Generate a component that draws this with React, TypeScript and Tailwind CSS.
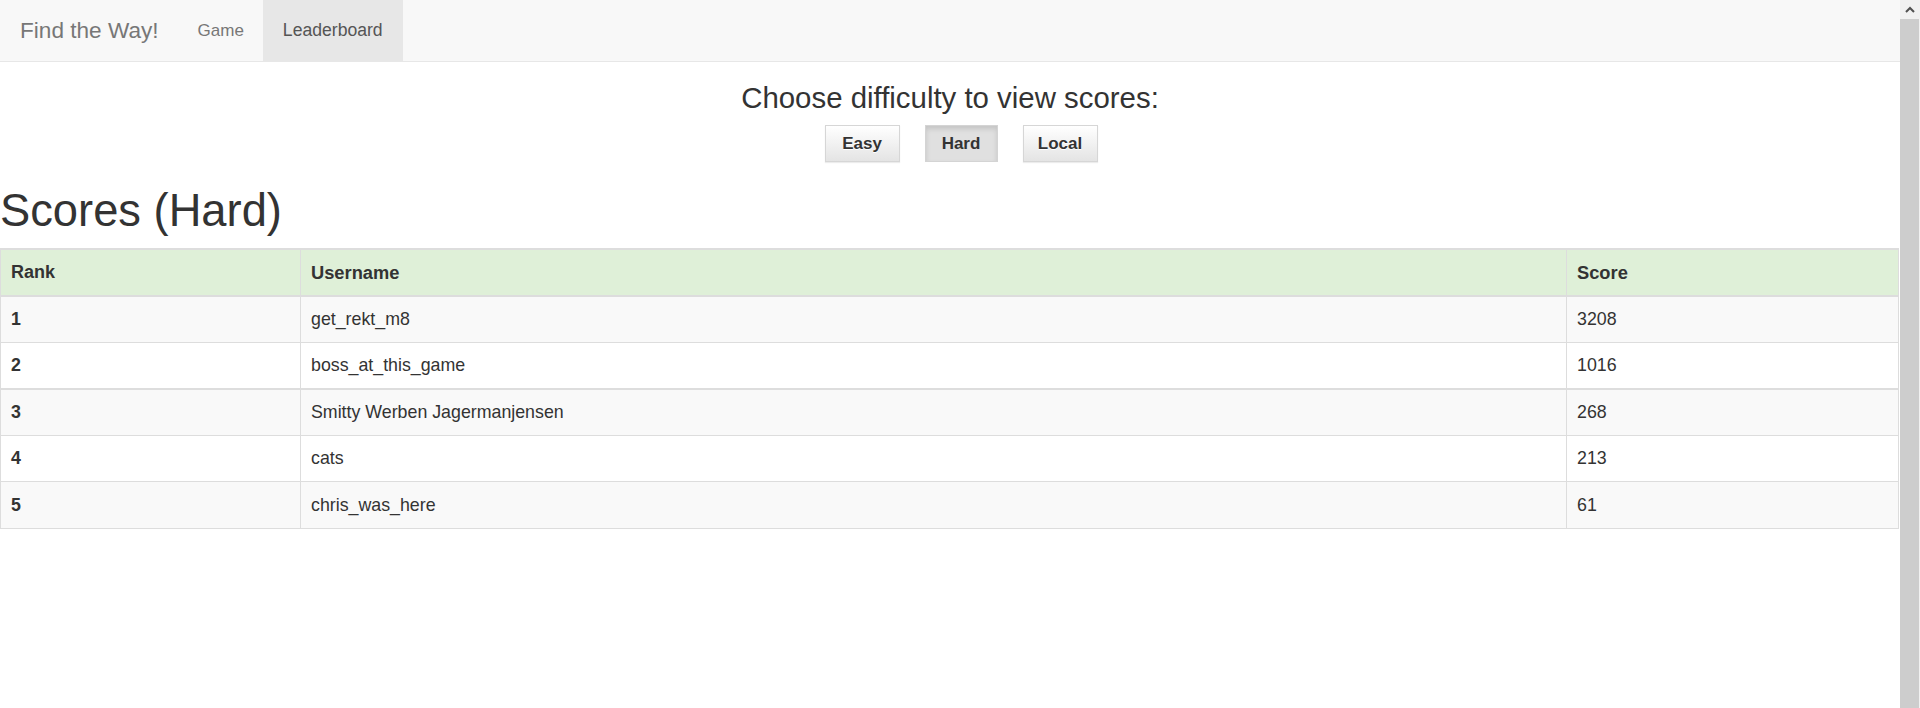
import React from "react";

const scores = [
  { rank: 1, username: "get_rekt_m8", score: 3208 },
  { rank: 2, username: "boss_at_this_game", score: 1016 },
  { rank: 3, username: "Smitty Werben Jagermanjensen", score: 268 },
  { rank: 4, username: "cats", score: 213 },
  { rank: 5, username: "chris_was_here", score: 61 },
];

const levels = ["Easy", "Hard", "Local"];

function Navbar() {
  return (
    <nav className="flex h-[62px] items-stretch border-b border-[#e7e7e7] bg-[#f8f8f8]">
      <a className="flex items-center pl-[20px] pr-[20px] text-[22.6px] text-[#777]">Find the Way!</a>
      <a className="flex items-center px-[19px] text-[17px] text-[#777]">Game</a>
      <a className="flex items-center bg-[#e7e7e7] px-[20px] text-[17.6px] text-[#555]">Leaderboard</a>
    </nav>
  );
}

function DifficultyPicker({ active }: { active: string }) {
  return (
    <div className="flex flex-col items-center pt-[20px]">
      <h3 className="text-[29.4px] leading-[1.1] text-[#333]">Choose difficulty to view scores:</h3>
      <div className="mt-[11px] flex gap-[25px] pl-[22px]">
        {levels.map((l) =>
          l === active ? (
            <button
              key={l}
              className="h-[37px] w-[73px] border border-[#d4d4d4] bg-[#e0e0e0] text-[17px] font-bold text-[#333] shadow-[inset_0_3px_5px_rgba(0,0,0,0.125)]"
            >
              {l}
            </button>
          ) : (
            <button
              key={l}
              className="h-[37px] w-[75px] border border-[#d6d6d6] bg-gradient-to-b from-white to-[#e4e4e4] text-[17px] font-bold text-[#333] shadow-[0_1px_1px_rgba(0,0,0,0.075)] [text-shadow:0_1px_0_#fff]"
            >
              {l}
            </button>
          )
        )}
      </div>
    </div>
  );
}

function ScoreTable() {
  return (
    <table className="mt-[12px] w-[1899px] table-fixed border-collapse text-[17.8px] text-[#333]">
      <thead>
        <tr className="bg-[#dff0d8]">
          <th className="h-[47px] w-[300px] border border-t-2 border-b-2 border-[#ddd] px-[10px] text-left text-[18px] font-bold">Rank</th>
          <th className="h-[47px] w-[1266px] border border-t-2 border-b-2 border-[#ddd] px-[10px] text-left text-[18.3px] font-bold">Username</th>
          <th className="h-[47px] border border-t-2 border-b-2 border-[#ddd] px-[10px] text-left text-[18.3px] font-bold">Score</th>
        </tr>
      </thead>
      <tbody>
        {scores.map((s, i) => {
          const stripe = i % 2 === 0 ? "bg-[#f9f9f9]" : "bg-white";
          const bottom = i === 1 ? "border-b-2" : "";
          return (
            <tr key={s.rank} className={stripe}>
              <td className={`h-[46.4px] border border-[#ddd] px-[10px] font-bold ${bottom}`}>{s.rank}</td>
              <td className={`h-[46.4px] border border-[#ddd] px-[10px] ${bottom}`}>{s.username}</td>
              <td className={`h-[46.4px] border border-[#ddd] px-[10px] ${bottom}`}>{s.score}</td>
            </tr>
          );
        })}
      </tbody>
    </table>
  );
}

function Scrollbar() {
  return (
    <div className="flex w-[20px] flex-col bg-[#f1f1f1]">
      <div className="flex h-[19px] items-center justify-center">
        <svg width="10" height="7" viewBox="0 0 10 7">
          <path d="M1 6 L5 2 L9 6" fill="none" stroke="#505050" strokeWidth="2" />
        </svg>
      </div>
      <div className="mr-px flex-1 bg-[#cdcdcd]" />
    </div>
  );
}

export default function App() {
  return (
    <div className="flex h-[708px] overflow-hidden bg-white font-['Liberation_Sans',Arial,sans-serif]">
      <main className="flex-1">
        <Navbar />
        <DifficultyPicker active="Hard" />
        <h1 className="mt-[24px] text-[45.3px] leading-[1.1] text-[#333]">Scores (Hard)</h1>
        <ScoreTable />
      </main>
      <Scrollbar />
    </div>
  );
}
